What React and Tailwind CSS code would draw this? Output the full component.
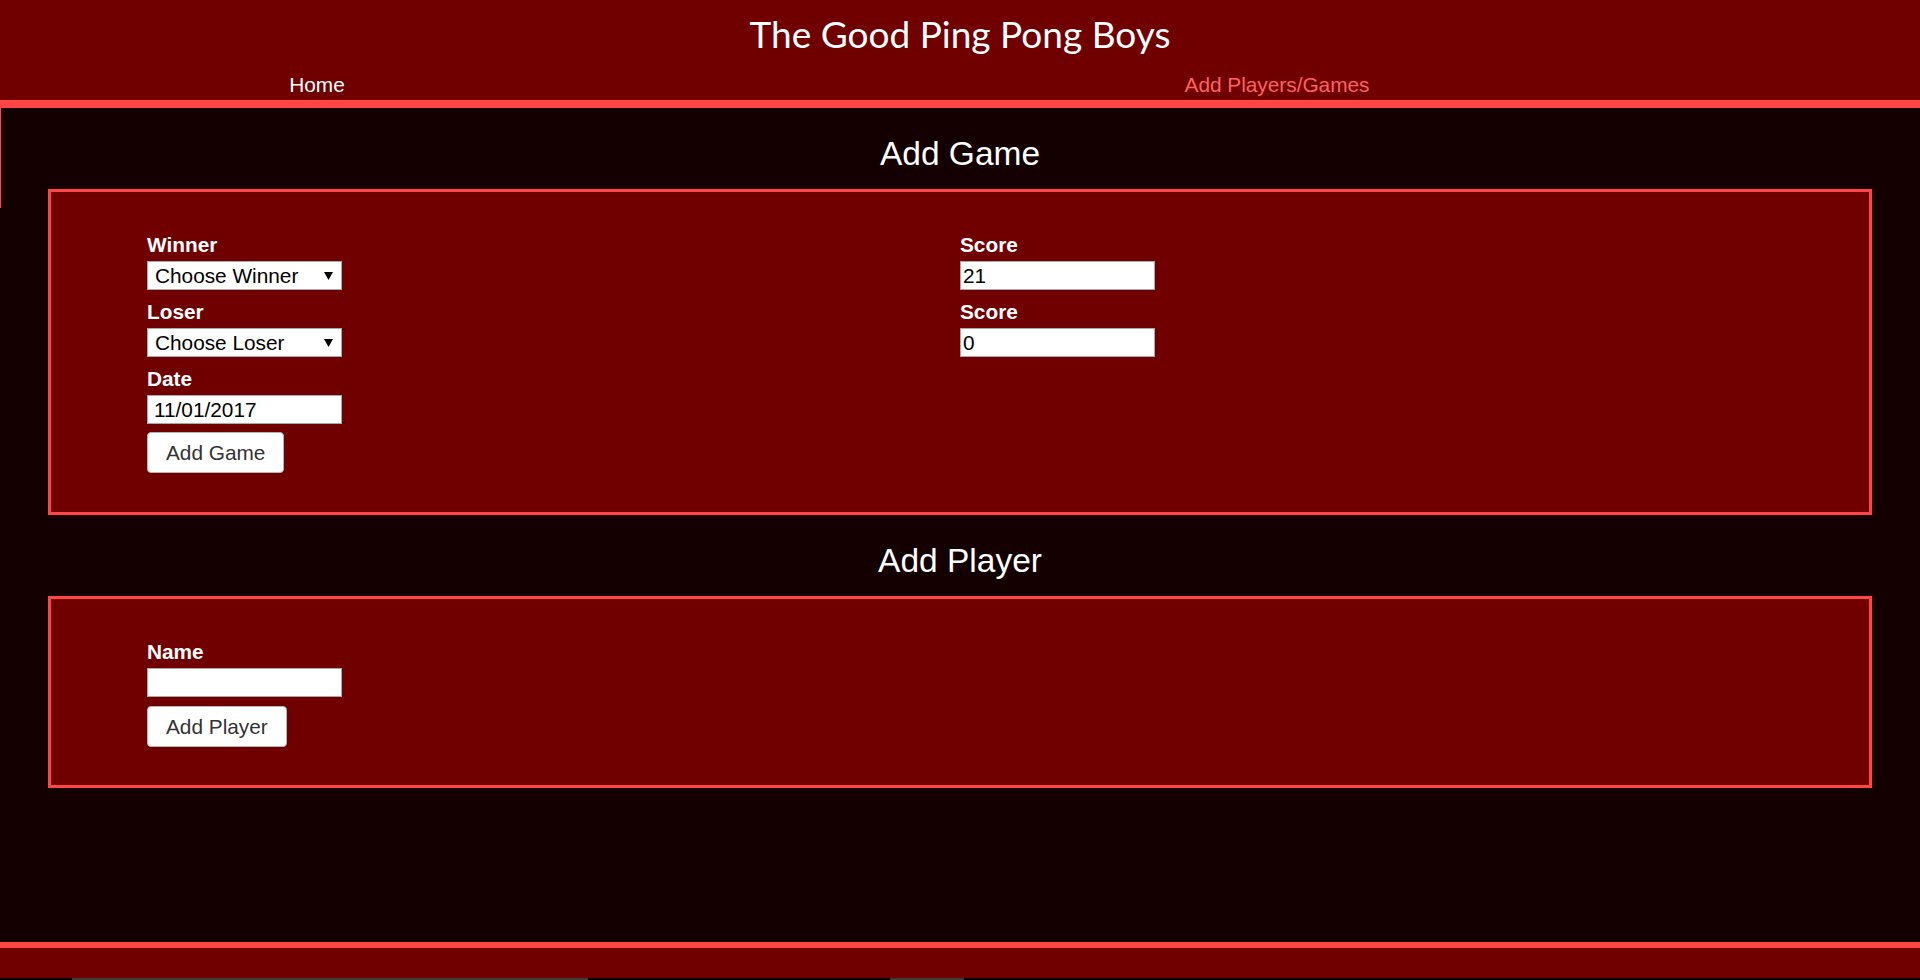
import React from "react";

const sans = { fontFamily: '"Liberation Sans", Arial, sans-serif' };

function Arrow() {
  return (
    <svg width="9" height="8" viewBox="0 0 9 8" className="pointer-events-none absolute right-[9px] top-[11px]">
      <polygon points="0,0 9,0 4.5,8" fill="#000" />
    </svg>
  );
}

function Field({ label, children, last }) {
  return (
    <div className={last ? "" : "mb-[10px]"}>
      <div className="h-[24px] leading-[24px] mb-[4px] text-[20.8px] font-bold text-white">{label}</div>
      {children}
    </div>
  );
}

function SelectBox({ text }) {
  return (
    <div className="relative w-[195px] h-[29px]">
      <select
        className="appearance-none w-[195px] h-[29px] bg-white border border-[#a9a9a9] pl-[7px] text-[20.8px] text-black leading-[27px] outline-none"
        style={sans}
        defaultValue=""
      >
        <option value="">{text}</option>
      </select>
      <Arrow />
    </div>
  );
}

function TextBox({ value, pl = "pl-[2px]" }) {
  return (
    <input
      type="text"
      defaultValue={value}
      className={`block w-[195px] h-[29px] bg-white border border-[#a9a9a9] ${pl} text-[20.8px] text-black outline-none`}
      style={sans}
    />
  );
}

function Btn({ children }) {
  return (
    <button
      className="h-[41px] px-[18px] bg-white border border-[#b5b5b5] rounded-[4px] text-[20.8px] text-[#333] leading-[39px]"
      style={sans}
    >
      {children}
    </button>
  );
}

function Heading({ children }) {
  return (
    <h2 className="mt-[27px] mb-[17px] h-[37px] leading-[37px] text-center text-[33.5px] text-white font-normal">
      {children}
    </h2>
  );
}

export default function App() {
  return (
    <div className="relative h-[980px] w-full flex flex-col bg-[#140000] overflow-hidden" style={sans}>
      <header className="h-[108px] shrink-0 bg-[#700000] border-b-[8px] border-[#ff4545] flex flex-col">
        <h1
          className="mt-[10px] h-[48px] leading-[48px] text-center text-[37px] text-white font-normal"
          style={{ fontFamily: 'Lato, "Open Sans", sans-serif' }}
        >
          The Good Ping Pong Boys
        </h1>
        <nav className="mt-[15px] h-[24px] grid grid-cols-3 text-[20.8px] leading-[24px]">
          <a className="text-center text-white pr-[6px]">Home</a>
          <a className="col-span-2 text-center text-[#ff6161] pr-[6px]">Add Players/Games</a>
        </nav>
      </header>

      <main className="flex-1 px-[48px]">
        <Heading>Add Game</Heading>
        <section className="border-[3px] border-[#ff4545] bg-[#700000] px-[96px] pt-[41px] pb-[39px] grid grid-cols-2">
          <div>
            <Field label="Winner">
              <SelectBox text="Choose Winner" />
            </Field>
            <Field label="Loser">
              <SelectBox text="Choose Loser" />
            </Field>
            <Field label="Date" last>
              <TextBox value="11/01/2017" pl="pl-[6px]" />
            </Field>
            <div className="mt-[8px]">
              <Btn>Add Game</Btn>
            </div>
          </div>
          <div>
            <Field label="Score">
              <TextBox value="21" />
            </Field>
            <Field label="Score">
              <TextBox value="0" />
            </Field>
          </div>
        </section>

        <Heading>Add Player</Heading>
        <section className="border-[3px] border-[#ff4545] bg-[#700000] px-[96px] pt-[41px] pb-[38px]">
          <Field label="Name" last>
            <TextBox value="" />
          </Field>
          <div className="mt-[9px]">
            <Btn>Add Player</Btn>
          </div>
        </section>
      </main>

      <footer className="h-[36px] shrink-0 bg-[#700000] border-t-[6px] border-[#ff4545]" />
      <div className="h-[2px] shrink-0 flex bg-black">
        <div className="w-[72px]" />
        <div className="w-[516px] bg-[#3c3c3c]" />
        <div className="w-[302px]" />
        <div className="w-[74px] bg-[#3c3c3c]" />
      </div>

      <div className="absolute left-0 top-[108px] w-[1px] h-[100px] bg-[#ff4545]" />
    </div>
  );
}
